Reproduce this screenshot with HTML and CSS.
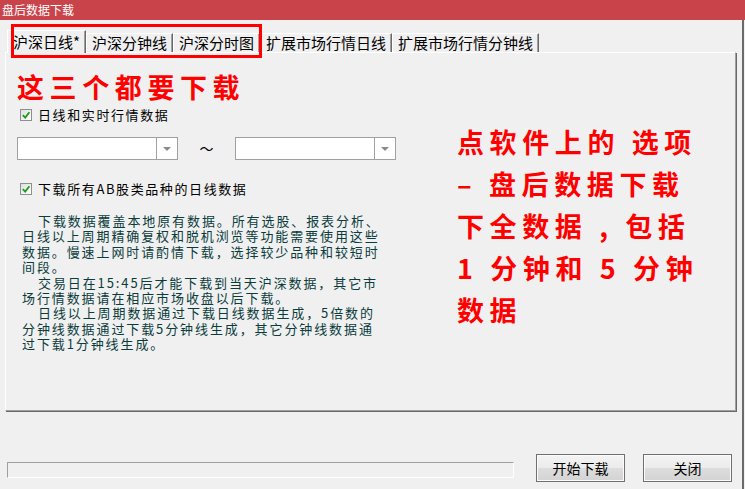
FILE: index.html
```html
<!DOCTYPE html>
<html lang="zh-CN">
<head>
    <meta charset="utf-8">
    <title>盘后数据下载</title>
    <link rel="stylesheet" href="styles.css">
</head>
<body>
    <div class="titlebar">盘后数据下载</div>
    <div class="client">
        <div class="tabs">
            <div class="tab active">沪深日线*</div>
            <div class="tab">沪深分钟线</div>
            <div class="tab">沪深分时图</div>
            <div class="tab">扩展市场行情日线</div>
            <div class="tab">扩展市场行情分钟线</div>
        </div>
        <!-- red marker drawn over the first three tabs -->
        <div class="tab-mark"></div>

        <div class="panel">
            <div class="options">
                <div class="note-red">这三个都要下载</div>
                <label class="check">
                    <span class="box"><svg width="10" height="10" viewBox="0 0 10 10"><path d="M1.8 5.2 L4.2 7.6 L8.4 2.2" fill="none" stroke="#1c9a1c" stroke-width="1.8"/></svg></span>
                    日线和实时行情数据
                </label>
                <div class="range">
                    <div class="combo"><span class="combo-btn"></span></div>
                    <span class="tilde">～</span>
                    <div class="combo"><span class="combo-btn"></span></div>
                </div>
                <label class="check check-ab">
                    <span class="box"><svg width="10" height="10" viewBox="0 0 10 10"><path d="M1.8 5.2 L4.2 7.6 L8.4 2.2" fill="none" stroke="#1c9a1c" stroke-width="1.8"/></svg></span>
                    下载所有AB股类品种的日线数据
                </label>
                <div class="info">
                    <div class="ind">下载数据覆盖本地原有数据。所有选股、报表分析、</div>
                    <div>日线以上周期精确复权和脱机浏览等功能需要使用这些</div>
                    <div>数据。慢速上网时请酌情下载，选择较少品种和较短时</div>
                    <div>间段。</div>
                    <div class="ind">交易日在15:45后才能下载到当天沪深数据，其它市</div>
                    <div>场行情数据请在相应市场收盘以后下载。</div>
                    <div class="ind">日线以上周期数据通过下载日线数据生成，5倍数的</div>
                    <div>分钟线数据通过下载5分钟线生成，其它分钟线数据通</div>
                    <div>过下载1分钟线生成。</div>
                </div>
            </div>
            <div class="hint">点软件上的 选项<br>– 盘后数据下载<br>下全数据 , 包括<br>1 分钟和 5 分钟<br>数据</div>
        </div>

        <div class="footer">
            <div class="progress"></div>
            <button class="btn">开始下载</button>
            <button class="btn btn-close">关闭</button>
        </div>
    </div>
</body>
</html>
```

FILE: styles.css
```css
/* Base */
html, body {margin: 0; padding: 0}
body {width: 745px; height: 489px; overflow: hidden; background: #f0f0f0; color: #000; font-family: "Noto Sans CJK SC", "Noto Sans", sans-serif}

/* Window */
.titlebar {height: 20px; line-height: 20px; padding-left: 2px; background: #c8444a; color: #fff; font-size: 12px}
.client {position: relative; width: 742px; height: 469px; border-right: 2px solid #6b6b6b}

/* Tabs */
.tabs {position: relative; z-index: 1; display: flex; align-items: flex-end; height: 23px; padding: 10px 0 0 7px; margin-bottom: -1px}
.tab {
    box-sizing: border-box;
    height: 19px;
    margin-bottom: 1px;
    padding: 0 5px;
    font-size: 15px;
    line-height: 18px;
    white-space: nowrap;
    border-left: 1px solid #fff;
    border-top: 1px solid #fff;
    border-right: 1px solid #696969;
    box-shadow: inset -1px 0 0 #a0a0a0;
    background: #f0f0f0;
}
.tab.active {height: 23px; margin-bottom: 0; line-height: 22px}
.tab-mark {position: absolute; left: 11px; top: 4px; width: 251px; height: 34px; box-sizing: border-box; border: 3px solid #f00; z-index: 2}

/* Panel */
.panel {
    display: grid;
    grid-template-columns: 451px 1fr;
    width: 729px;
    height: 357px;
    margin-left: 5px;
    border: 1px solid #fff;
    border-right-color: #a0a0a0;
    border-bottom-color: #a0a0a0;
    box-shadow: 1px 1px 0 #696969;
}
.options {padding: 20px 0 0 11px}
.note-red {font-size: 27px; line-height: 27px; font-weight: 700; color: #f00; letter-spacing: 5.6px; white-space: nowrap}

.check {display: flex; align-items: center; height: 15px; margin-top: 7px; padding-left: 3px; font-size: 13px; letter-spacing: 1.6px; white-space: nowrap}
.check-ab {margin-top: 21px}
.box {display: flex; align-items: center; justify-content: center; box-sizing: border-box; width: 12px; height: 12px; margin-right: 6px; border: 1px solid #8e8f8f; background: linear-gradient(135deg, #dedede, #fff)}

.range {display: flex; height: 23px; margin-top: 15px}
.combo {display: flex; justify-content: flex-end; box-sizing: border-box; width: 161px; height: 23px; border: 1px solid #a0a0a0; background: #fff}
.combo-btn {display: flex; align-items: center; justify-content: center; box-sizing: border-box; width: 21px; border-left: 1px solid #a0a0a0}
.combo-btn::after {content: ""; border-left: 4px solid transparent; border-right: 4px solid transparent; border-top: 4px solid #8a8a8a}
.tilde {width: 57px; text-align: center; font-size: 14px; line-height: 23px}

.info {margin: 17px 0 0 5px; font-size: 13px; line-height: 15.4px; letter-spacing: 1.9px; color: #0b3c3c; white-space: nowrap}
.info .ind {padding-left: 16px}

.hint {padding-top: 68px; font-size: 27px; line-height: 42px; font-weight: 700; color: #f00; letter-spacing: 5.6px; white-space: nowrap}

/* Footer */
.footer {display: flex; align-items: flex-start; margin-top: 43px; padding-left: 7px}
.progress {box-sizing: border-box; width: 507px; height: 16px; margin-top: 8px; border: 1px solid #fff; border-top-color: #a0a0a0; border-left-color: #a0a0a0}
.btn {
    box-sizing: border-box;
    width: 89px;
    height: 28px;
    margin-left: 22px;
    padding: 0;
    border: 1px solid #707070;
    box-shadow: inset 0 0 0 1px #fbfbfb;
    background: linear-gradient(#f4f4f4, #ebebeb 50%, #dddddd 51%, #d3d3d3);
    font-family: inherit;
    font-size: 14px;
    color: #000;
}
.btn-close {margin-left: 18px}
```
